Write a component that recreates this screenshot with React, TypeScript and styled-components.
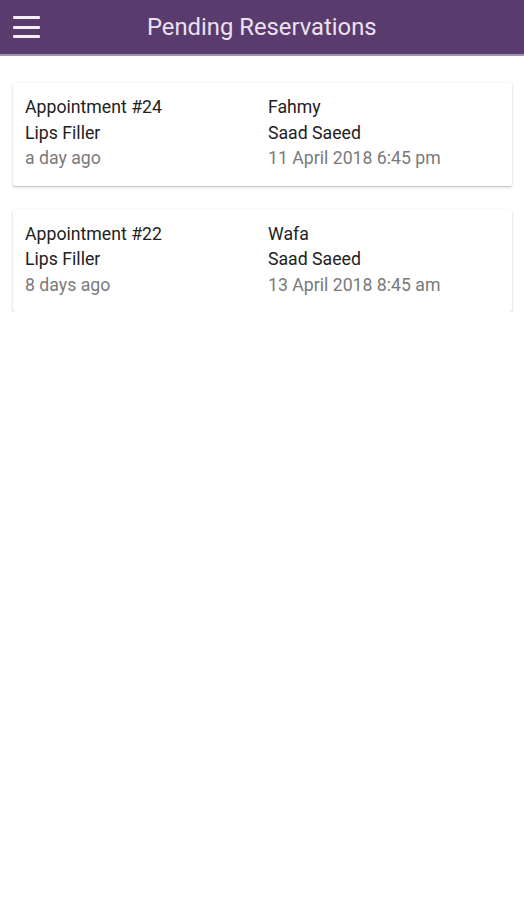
import React from 'react';
import styled, { createGlobalStyle } from 'styled-components';

const GlobalStyle = createGlobalStyle`
    html, body {
        margin: 0;
        padding: 0;
        background: #ffffff;
        font-family: Roboto, "Liberation Sans", sans-serif;
    }
`;

const AppBar = styled.header`
    height: 56px;
    background: #5a3b6d;
    border-bottom: 2px solid #a592b3;
    display: flex;
    align-items: center;
    box-sizing: border-box;
`;

const MenuButton = styled.button`
    background: none;
    border: none;
    padding: 0;
    margin-left: 13px;
    width: 27px;
    height: 22px;
    display: flex;
    flex-direction: column;
    justify-content: space-between;
    cursor: pointer;
`;

const MenuLine = styled.span`
    display: block;
    height: 3px;
    width: 100%;
    background: #f4eef7;
    border-radius: 1px;
`;

const Title = styled.h1`
    margin: 0 0 0 107px;
    font-size: 23.8px;
    font-weight: 400;
    color: #ebe1f0;
`;

const List = styled.main`
    display: flex;
    flex-direction: column;
    gap: 24px;
    padding: 27px 12px 0 13px;
`;

const Card = styled.div`
    display: grid;
    grid-template-columns: 243px 1fr;
    padding: 12px 12px 14px 12px;
    background: #ffffff;
    border-radius: 2px;
    box-shadow: 0 1px 3px rgba(0, 0, 0, 0.22), 0 1px 1px rgba(0, 0, 0, 0.08);
`;

const Column = styled.div`
    display: flex;
    flex-direction: column;
`;

const Line = styled.div<{ muted?: boolean }>`
    font-size: 17.7px;
    line-height: 25.5px;
    color: ${props => (props.muted ? '#7a7a7a' : '#222222')};
`;

interface IReservation {
    id: number;
    service: string;
    ago: string;
    client: string;
    staff: string;
    date: string;
}

const reservations: IReservation[] = [
    { id: 24, service: 'Lips Filler', ago: 'a day ago', client: 'Fahmy', staff: 'Saad Saeed', date: '11 April 2018 6:45 pm' },
    { id: 22, service: 'Lips Filler', ago: '8 days ago', client: 'Wafa', staff: 'Saad Saeed', date: '13 April 2018 8:45 am' },
];

const App: React.FC = () => {
    return (
        <>
            <GlobalStyle />
            <AppBar>
                <MenuButton aria-label="menu">
                    <MenuLine />
                    <MenuLine />
                    <MenuLine />
                </MenuButton>
                <Title>Pending Reservations</Title>
            </AppBar>
            <List>
                {reservations.map(r => (
                    <Card key={r.id}>
                        <Column>
                            <Line>Appointment #{r.id}</Line>
                            <Line>{r.service}</Line>
                            <Line muted>{r.ago}</Line>
                        </Column>
                        <Column>
                            <Line>{r.client}</Line>
                            <Line>{r.staff}</Line>
                            <Line muted>{r.date}</Line>
                        </Column>
                    </Card>
                ))}
            </List>
        </>
    );
};

export default App;
